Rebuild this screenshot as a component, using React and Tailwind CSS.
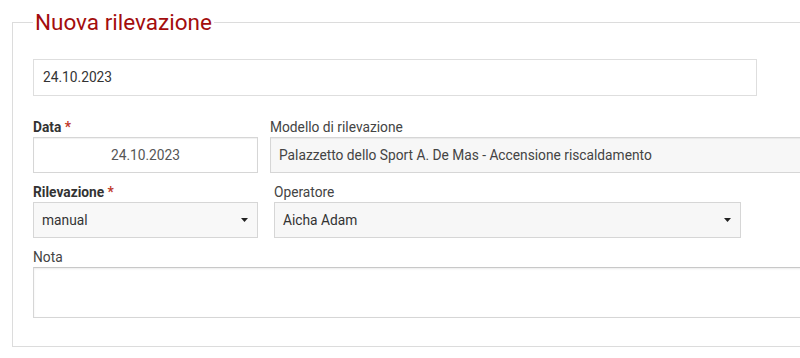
import React from "react";

function Caret() {
  return (
    <svg width="7" height="4" viewBox="0 0 7 4" className="shrink-0">
      <path d="M0 0 L7 0 L3.5 4 Z" fill="#222" />
    </svg>
  );
}

export default function App() {
  return (
    <div
      className="w-[800px] h-[358px] overflow-hidden bg-white"
      style={{ fontFamily: "Roboto, 'Liberation Sans', sans-serif" }}
    >
      <fieldset className="ml-[12px] mt-[10px] w-[900px] border border-[#dcdcdc] pl-[20px] pt-[25px] pb-[28px]">
        <legend className="px-[2px] text-[22.5px] leading-[24px] text-[#a30d0d]">
          Nuova rilevazione
        </legend>

        <div className="w-[724px] h-[37px] border border-[#dedede] bg-white flex items-center pl-[9px] text-[13.75px] text-[#333]">
          24.10.2023
        </div>

        <div className="flex gap-[12px] mt-[21px]">
          <div className="w-[225px] shrink-0">
            <div className="text-[13.75px] leading-[20px] font-bold text-[#333]">
              Data <span className="text-[#c0392b]">*</span>
            </div>
            <div className="h-[36px] border border-[#d6d6d6] bg-white flex items-center justify-center text-[13.75px] text-[#555] shadow-[inset_0_1px_1px_rgba(0,0,0,0.06)]">
              24.10.2023
            </div>
          </div>
          <div className="flex-1">
            <div className="text-[13.75px] leading-[20px] text-[#444]">Modello di rilevazione</div>
            <div className="h-[36px] border border-[#d6d6d6] bg-[#f7f7f7] flex items-center pl-[8px] text-[13.75px] text-[#444] shadow-[inset_0_1px_1px_rgba(0,0,0,0.06)]">
              Palazzetto dello Sport A. De Mas - Accensione riscaldamento
            </div>
          </div>
        </div>

        <div className="flex gap-[16px] mt-[9px]">
          <div className="w-[225px] shrink-0">
            <div className="text-[13.75px] leading-[20px] font-bold text-[#333]">
              Rilevazione <span className="text-[#c0392b]">*</span>
            </div>
            <div className="h-[36px] border border-[#d6d6d6] bg-[#f8f8f8] flex items-center justify-between pl-[8px] pr-[9px] text-[13.75px] text-[#333]">
              <span>manual</span>
              <Caret />
            </div>
          </div>
          <div className="w-[467px] shrink-0">
            <div className="text-[13.75px] leading-[20px] text-[#444]">Operatore</div>
            <div className="h-[36px] border border-[#d6d6d6] bg-[#f7f7f7] flex items-center justify-between pl-[8px] pr-[9px] text-[13.75px] text-[#333]">
              <span>Aicha Adam</span>
              <Caret />
            </div>
          </div>
        </div>

        <div className="mt-[9px]">
          <div className="text-[13.75px] leading-[20px] text-[#444]">Nota</div>
          <div className="h-[51px] border border-[#d6d6d6] border-t-[#c8c8c8] bg-white shadow-[inset_0_1px_2px_rgba(0,0,0,0.08)]"></div>
        </div>
      </fieldset>
    </div>
  );
}
